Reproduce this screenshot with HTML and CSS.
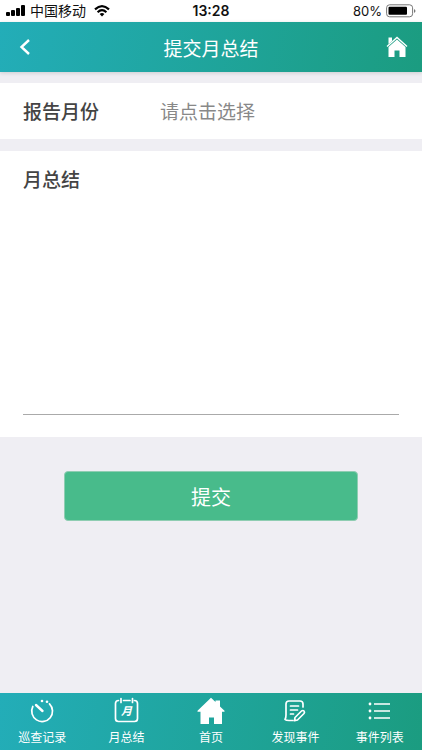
FILE: index.html
```html
<!DOCTYPE html>
<html lang="zh-CN">
<head>
<meta charset="utf-8">
<meta name="viewport" content="width=device-width, initial-scale=1">
<title>提交月总结</title>
<link rel="stylesheet" href="styles.css">
</head>
<body>
<div class="status">
  <div class="status-side">
    <svg class="signal" width="20" height="12" viewBox="0 0 20 12" aria-hidden="true"><rect x="0" y="7" width="4" height="4" rx="1"/><rect x="5" y="5" width="4" height="6" rx="1"/><rect x="10" y="3" width="4" height="8" rx="1"/><rect x="15" y="0" width="4" height="11" rx="1"/></svg>
    <span class="carrier">中国移动</span>
    <svg class="wifi" width="16" height="12" viewBox="0 0 16 12" aria-hidden="true"><g fill="none" stroke="#000" stroke-width="2.2"><path d="M1 4.4Q8-2 15 4.4"/><path d="M3.6 7.2Q8 3.2 12.4 7.2"/></g><path d="M5.6 8.9Q8 7 10.4 8.9L8 11.5z"/></svg>
  </div>
  <time class="clock">13:28</time>
  <div class="status-side status-end">
    <span class="percent">80%</span>
    <svg width="30" height="14" viewBox="0 0 30 14" aria-hidden="true"><rect x=".6" y=".8" width="26" height="12" rx="3" fill="none" stroke="#777"/><rect x="2.5" y="2.8" width="18.5" height="8" rx="1"/><path d="M28 5q3 2 0 4z" fill="#777"/></svg>
  </div>
</div>
<header class="header">
  <a class="back" href="#back" aria-label="返回"><svg width="12" height="18" viewBox="0 0 12 18"><path d="M10 2L2.500 9l7.500 7" fill="none" stroke="#fff" stroke-width="2.4"/></svg></a>
  <h1 class="title">提交月总结</h1>
  <a class="home" href="#home" aria-label="首页"><svg width="22" height="22" viewBox="0 0 22 22"><path d="M2.500 1.500h3.500v3.500L2.500 8z" fill="#fff"/><path d="M1 10.500L11 1.500l10 9" fill="none" stroke="#fff" stroke-width="1.400"/><path d="M11 3.600l8.500 7.400v10h-6v-6.500h-5V21h-6V11z" fill="#fff"/></svg></a>
</header>
<main class="content">
  <form class="form" id="report">
    <div class="panel month-row">
      <label class="label" for="month">报告月份</label>
      <select class="month" id="month"><option>请点击选择</option></select>
    </div>
    <div class="panel summary-panel">
      <label class="label" for="summary">月总结</label>
      <textarea class="summary" id="summary"></textarea>
    </div>
    <button class="submit" type="submit">提交</button>
  </form>
</main>
<nav class="tabs">
  <a class="tab" href="#patrol">
    <svg width="28" height="28" viewBox="0 0 28 28" fill="none" stroke="#fff" stroke-width="1.700" stroke-linecap="round"><path d="M21.500 6.800A10.400 10.400 0 1 1 4.800 9.500"/><path d="M8 8l6.500 6" stroke-width="2.400"/><circle cx="14" cy="4" r="1.300" fill="#fff" stroke="none"/><circle cx="19" cy="4.800" r="1.300" fill="#fff" stroke="none"/></svg>
    <span>巡查记录</span>
  </a>
  <a class="tab" href="#summary">
    <svg width="28" height="28" viewBox="0 0 28 28" fill="none" stroke="#fff" stroke-width="1.700" stroke-linecap="round"><path d="M5.500 3.500Q2.500 3.500 2.500 6.500v15q0 3 3 3h16q3 0 3-3v-15q0-3-3-3M10.500 3.500h6.500M8 1.500v4M19.500 1.500v4"/><text class="glyph" x="13.500" y="18" text-anchor="middle">月</text></svg>
    <span>月总结</span>
  </a>
  <a class="tab" href="#home" aria-current="page">
    <svg width="28" height="28" viewBox="0 0 28 28" fill="#fff"><path d="M14 .8l4.500 4.300V3.500H23v6l4.500 4.300v1H25V27h-8v-6.500h-5V27H3.500V14.800H.5v-1z"/></svg>
    <span>首页</span>
  </a>
  <a class="tab" href="#report">
    <svg width="28" height="28" viewBox="0 0 28 28" fill="none" stroke="#fff" stroke-width="1.700" stroke-linecap="round" stroke-linejoin="round"><path d="M22 10V7q0-3-3-3H8Q5 4 5 7v11q0 3-1 4.500Q5 23.500 8 23.500h4M9.500 9h8M9.500 13h7M9.500 17h3"/><path d="M14 20.500l6.500-6.500q1.500-1 2.500 0t0 2.500L16.500 23l-3 .7z"/></svg>
    <span>发现事件</span>
  </a>
  <a class="tab" href="#events">
    <svg width="28" height="28" viewBox="0 0 28 28" fill="none" stroke="#fff" stroke-width="1.700"><path d="M8 7h16M8 14h16M8 21h16"/><g fill="#fff" stroke="none"><circle cx="4" cy="7" r="1.400"/><circle cx="4" cy="14" r="1.400"/><circle cx="4" cy="21" r="1.400"/></g></svg>
    <span>事件列表</span>
  </a>
</nav>
</body>
</html>
```

FILE: styles.css
```css
* {
  box-sizing: border-box;
}

body {
  margin: 0;
  min-height: 100vh;
  display: flex;
  flex-direction: column;
  background: #efeef3;
  color: #444;
  font-family: "Liberation Sans", "Noto Sans CJK SC", sans-serif;
}

svg {
  display: block;
  flex: none;
}

a {
  color: #fff;
  text-decoration: none;
}

.status {
  display: grid;
  grid-template-columns: 1fr auto 1fr;
  align-items: center;
  height: 22px;
  padding: 0 6px;
  background: #fff;
  color: #111;
  font-size: 14px;
  line-height: 22px;
}

.status-side {
  display: flex;
  align-items: center;
  gap: 4px;
}

.wifi {
  margin-left: 4px;
}

.status-end {
  justify-content: flex-end;
}

.clock {
  font-family: Inter, sans-serif;
  font-weight: 600;
}

.percent {
  font-family: Inter, sans-serif;
  font-size: 13px;
}

.header,
.tabs {
  background: linear-gradient(100deg, #23adb8, #1b9c80);
}

.header {
  display: grid;
  grid-template-columns: 1fr auto 1fr;
  align-items: center;
  height: 50px;
  padding: 0 14px;
  box-shadow: 0 1px 4px rgba(0, 0, 0, 0.15);
}

.back {
  padding-left: 5px;
}

.title {
  margin: 0;
  color: #fff;
  font-size: 19px;
  font-weight: 400;
}

.home {
  justify-self: end;
}

.content {
  flex: 1;
  padding-top: 11px;
}

.form {
  display: flex;
  flex-direction: column;
  gap: 12px;
}

.panel {
  padding: 0 23px;
  background: #fff;
}

.month-row {
  display: grid;
  grid-template-columns: 137px 1fr;
  align-items: center;
  height: 56px;
  padding-top: 4px;
}

.label {
  font-size: 19px;
  font-weight: 500;
  line-height: 28px;
}

.month {
  appearance: none;
  margin: 0;
  padding: 0;
  border: 0;
  background: transparent;
  color: #888;
  font: inherit;
  font-size: 19px;
  line-height: 28px;
}

.summary-panel {
  display: flex;
  flex-direction: column;
  padding-top: 16px;
  padding-bottom: 22px;
}

.summary {
  height: 220px;
  padding: 8px 0;
  border: 0;
  border-bottom: 1px solid #aaa;
  outline: 0;
  resize: none;
  background: transparent;
  color: #444;
  font: inherit;
  font-size: 17px;
}

.submit {
  height: 50px;
  margin: 22px 64px 24px;
  border: 1px solid #8fcdb2;
  border-radius: 4px;
  background: #48bb8b;
  color: #fff;
  font: inherit;
  font-size: 20px;
}

.tabs {
  display: grid;
  grid-template-columns: repeat(5, 1fr);
  height: 57px;
  padding-top: 4px;
}

.tab {
  display: flex;
  flex-direction: column;
  align-items: center;
  gap: 4px;
  font-size: 12px;
  line-height: 18px;
}

.glyph {
  fill: #fff;
  stroke: none;
  font-size: 11px;
  font-style: italic;
  font-weight: 700;
}
```
